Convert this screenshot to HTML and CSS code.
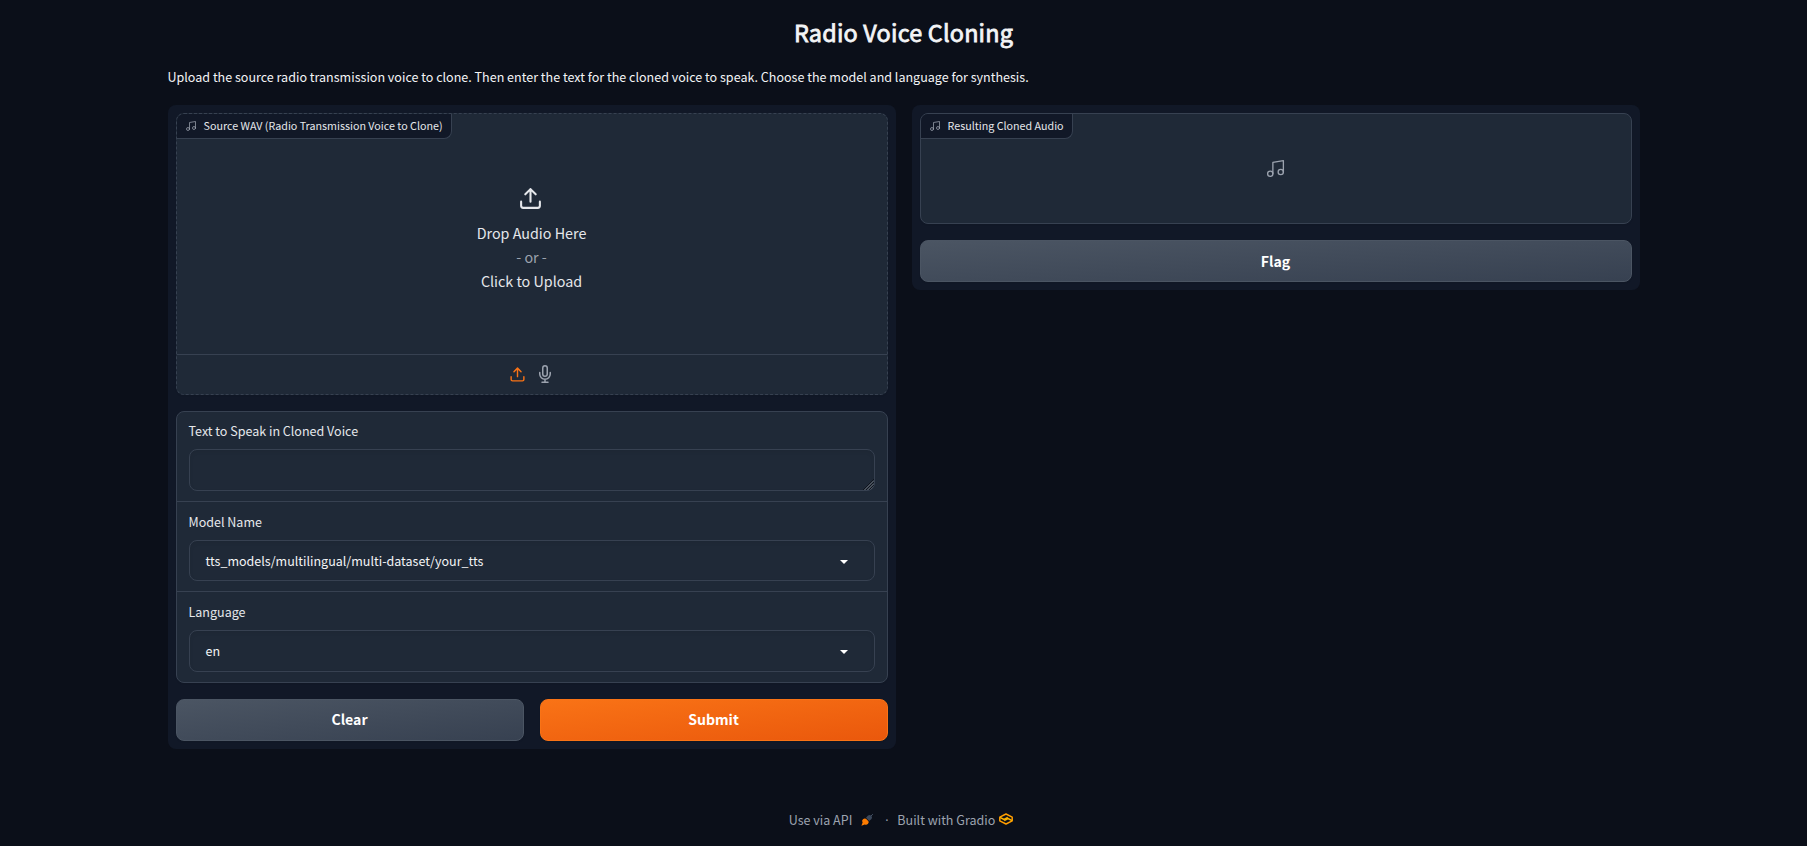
FILE: index.html
```html
<!DOCTYPE html>
<html lang="en">
<head>
<meta charset="utf-8">
<title>Radio Voice Cloning</title>
<link rel="stylesheet" href="styles.css">
</head>
<body>
<svg class="defs" width="0" height="0">
  <symbol id="music" viewBox="0 0 24 24"><g fill="none" stroke="currentColor" stroke-width="1.5" stroke-linecap="round" stroke-linejoin="round"><path d="M9 18V5l12-2v13"/><circle cx="6" cy="18" r="3"/><circle cx="18" cy="16" r="3"/></g></symbol>
  <symbol id="upload" viewBox="0 0 24 24"><g fill="none" stroke="currentColor" stroke-width="2" stroke-linecap="round" stroke-linejoin="round"><path d="M21 15v4a2 2 0 0 1-2 2H5a2 2 0 0 1-2-2v-4"/><path d="M17 8l-5-5-5 5M12 3v12"/></g></symbol>
  <symbol id="mic" viewBox="0 0 24 24"><g fill="none" stroke="currentColor" stroke-width="2" stroke-linecap="round" stroke-linejoin="round"><path d="M12 1a3 3 0 0 0-3 3v8a3 3 0 0 0 6 0V4a3 3 0 0 0-3-3z"/><path d="M19 10v2a7 7 0 0 1-14 0v-2M12 19v4M8 23h8"/></g></symbol>
</svg>
<main class="app">
  <h1 class="title">Radio Voice Cloning</h1>
  <p class="description">Upload the source radio transmission voice to clone. Then enter the text for the cloned voice to speak. Choose the model and language for synthesis.</p>
  <div class="columns">
    <section class="panel">
      <div class="block upload">
        <div class="block-label"><svg class="label-icon"><use href="#music"/></svg><span>Source WAV (Radio Transmission Voice to Clone)</span></div>
        <div class="dropzone">
          <svg class="drop-icon"><use href="#upload"/></svg>
          <span>Drop Audio Here</span>
          <span class="or">- or -</span>
          <span>Click to Upload</span>
        </div>
        <div class="sources">
          <svg class="source-upload"><use href="#upload"/></svg>
          <svg class="source-mic"><use href="#mic"/></svg>
        </div>
      </div>
      <div class="block form">
        <div class="field first"><label class="field-label" for="text">Text to Speak in Cloned Voice</label><div class="textbox-wrap"><textarea id="text" class="input textbox"></textarea><svg class="grip" viewBox="0 0 11 11"><path d="M0 11 11 0M3 11l8-8M6 11l5-5M9 11l2-2" stroke="#0f141d" stroke-width="1"/><path d="M1.500 11 11 1.500M4.500 11 11 4.500M7.500 11 11 7.500" stroke="#7b818b" stroke-width=".9"/></svg></div></div>
        <div class="field"><span class="field-label">Model Name</span><div class="input select short"><span>tts_models/multilingual/multi-dataset/your_tts</span><svg class="caret" viewBox="0 0 8 4"><path d="M0 0h8L4 4z"/></svg></div></div>
        <div class="field last"><span class="field-label">Language</span><div class="input select"><span>en</span><svg class="caret" viewBox="0 0 8 4"><path d="M0 0h8L4 4z"/></svg></div></div>
      </div>
      <div class="actions">
        <button class="button secondary">Clear</button>
        <button class="button primary">Submit</button>
      </div>
    </section>
    <section class="panel">
      <div class="block result">
        <div class="block-label"><svg class="label-icon"><use href="#music"/></svg><span>Resulting Cloned Audio</span></div>
        <svg class="empty-icon"><use href="#music"/></svg>
      </div>
      <button class="button secondary">Flag</button>
    </section>
  </div>
  <footer class="footer">
    <span>Use via API</span>
    <svg class="plug" viewBox="0 0 12 12"><path d="M11.800.2 9.900 2.100" stroke="#475569" stroke-width="1"/><path d="M5 3.800 7 1.500a2.500 2.500 0 0 1 3.500 3.500L8.200 7z" fill="#3b475a"/><path d="M2 5.200a2.600 2.600 0 0 1 3-.5l2.500 2.500a2.600 2.600 0 0 1-3.700 3.200L.4 11.800l1.200-3.200A2.600 2.600 0 0 1 2 5.200z" fill="#ff7c00"/></svg>
    <span class="dot">·</span>
    <span>Built with Gradio</span>
    <svg class="logo" viewBox="0 0 14 12"><g fill="none" stroke-width="1.500" stroke-linejoin="round"><path d="M.8 4.200 7 1l6.200 3.200v3.600L7 11 .8 7.800z" stroke="#ff9d00"/><path d="M1 4.400 5 6.500 8.800 4.400M13 7.600 9 5.500 5.200 7.600" stroke="#f9b000"/></g></svg>
  </footer>
</main>
</body>
</html>
```
FILE: styles.css
```css
* { box-sizing: border-box; }
body { margin: 0; background: #0b0f19; color: #f3f4f6; font-family: "Noto Sans CJK SC", "Open Sans", sans-serif; font-size: 12.530px; }
svg { display: block; overflow: visible; flex: none; }
.defs { position: absolute; }
.app { width: 1472px; height: 846px; margin: 0 auto; display: flex; flex-direction: column; }
.title { margin: 15px 0 0; height: 34px; line-height: 34px; font-size: 23.400px; font-weight: 400; letter-spacing: .2px; -webkit-text-stroke: .8px currentColor; text-align: center; }
.description { margin: 16px 0 0; height: 23px; line-height: 23px; font-size: 12.545px; }
.columns { display: grid; grid-template-columns: 1fr 1fr; gap: 16px; align-items: start; margin-top: 17px; }
.panel { background: #111827; border-radius: 8px; padding: 8px; display: flex; flex-direction: column; gap: 16px; }
.block { position: relative; background: #1f2937; border: 1px solid #374151; border-radius: 8px; box-shadow: 0 1px 2px rgba(0,0,0,.05); }
.upload { height: 282px; border-style: dashed; display: flex; flex-direction: column; }
.block-label { position: absolute; left: 0; top: 0; height: 25px; padding: 0 8px 1px 8px; display: flex; align-items: center; gap: 7px; background: #111827; color: #e5e7eb; border: solid #374151; border-width: 0 1px 1px 0; border-radius: 7px 0 8px 0; font-size: 10.720px; line-height: 20px; white-space: nowrap; }
.label-icon { width: 12px; height: 12px; color: #9ca3af; }
.dropzone { flex: 1; display: flex; flex-direction: column; align-items: center; padding-top: 72px; font-size: 14.320px; line-height: 24px; color: #e5e7eb; }
.drop-icon { width: 25px; height: 25px; margin: 0 2px 10px 0; }
.or { color: #9ca3af; }
.sources { height: 40px; padding-bottom: 1px; border-top: 1px solid #374151; display: flex; align-items: center; justify-content: center; gap: 10px; color: #9ca3af; }
.source-upload { width: 17px; height: 17px; color: #f97316; }
.source-mic { width: 18px; height: 18px; }
.form { height: 272px; }
.field { height: 90px; padding: 9px 12px 0; border-bottom: 1px solid #374151; }
.field.first { padding-top: 8px; }
.field.last { border-bottom: 0; }
.field-label { display: block; height: 21px; line-height: 21px; margin-bottom: 8px; color: #e5e7eb; }
.textbox-wrap { position: relative; }
.input { display: block; width: 100%; height: 42px; background: #1f2937; border: 1px solid #374151; border-radius: 8px; box-shadow: inset 0 2px 4px rgba(0,0,0,.06); color: #f3f4f6; }
.textbox { resize: none; outline: 0; padding: 10px; }
.grip { position: absolute; right: 1px; bottom: 1px; width: 11px; height: 11px; overflow: hidden; border-radius: 0 0 6px 0; }
.select { display: flex; align-items: center; justify-content: space-between; padding: 0 26px 1px 16px; }
.short { height: 41px; }
.caret { width: 8px; height: 4px; margin-top: 3px; fill: #fff; }
.actions { display: grid; grid-template-columns: 1fr 1fr; gap: 16px; }
.button { height: 42px; border-radius: 8px; border: 1px solid #4b5563; color: #fff; font: 600 14.100px/20px "Noto Sans CJK SC", "Open Sans", sans-serif; padding: 0; box-shadow: 0 1px 2px rgba(0,0,0,.05); }
.actions .button { padding-bottom: 2px; }
.secondary { background: linear-gradient(to bottom right, #4b5563, #374151); }
.primary { background: linear-gradient(to bottom right, #f97316, #ea580c); border-color: #f97316; }
.result { height: 111px; display: flex; align-items: center; justify-content: center; }
.empty-icon { width: 21px; height: 21px; color: #9ca3af; }
.footer { margin: auto 0 15px; height: 24px; display: flex; align-items: center; justify-content: center; color: #9ca3af; }
.plug { width: 12px; height: 12px; margin: 1px 0 0 9px; }
.dot { width: 4px; margin: 2px 8px 0 12px; font-family: "Open Sans", sans-serif; }
.logo { width: 14px; height: 12px; margin: 0 5px 1px 4px; }
```
